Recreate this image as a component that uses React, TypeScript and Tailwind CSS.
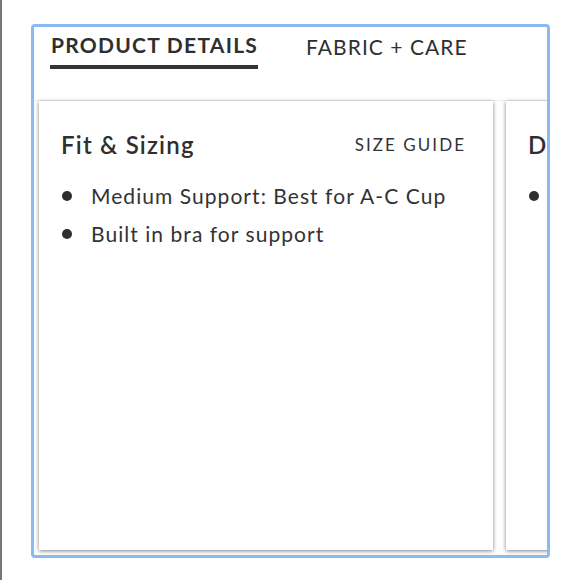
import React from 'react';

const Card: React.FC<{ title: string; action?: string; items: string[] }> = ({ title, action, items }) => {
  return (
    <div className="shrink-0 w-[454px] h-[449px] bg-white shadow-[0_1px_4px_rgba(0,0,0,0.5)] pl-[22px] pr-[27px] pt-[27px]">
      <div className="flex items-center justify-between h-[34px]">
        <h3 className="text-[24px] font-semibold tracking-[0.05em] text-[#2f2f2f]">{title}</h3>
        {action && <span className="text-[17px] tracking-[0.12em] text-[#333]">{action}</span>}
      </div>
      <ul className="mt-[15px] flex flex-col">
        {items.map((item) => (
          <li key={item} className="flex items-center h-[38px] text-[21px] tracking-[0.05em] text-[#333] whitespace-nowrap">
            <span className="w-[10px] h-[10px] rounded-full bg-[#2f2f2f] ml-[1px] mr-[19px] shrink-0" />
            {item}
          </li>
        ))}
      </ul>
    </div>
  );
};

const App: React.FC = () => {
  return (
    <div className="w-[580px] h-[580px] bg-white border-l-2 border-[#777] pt-[24px] pl-[29px]" style={{ fontFamily: 'Lato, "Noto Sans", sans-serif' }}>
      <div className="w-[519px] h-[534px] border-[3px] border-[#8bbaf0] rounded-[4px] overflow-hidden flex flex-col">
        <div className="flex items-start gap-[48px] pl-[17px] pt-[3px] h-[73px] text-[21px] text-[#2f2f2f]">
          <div className="flex flex-col">
            <span className="font-bold tracking-[0.06em] leading-[30px]">PRODUCT DETAILS</span>
            <span className="mt-[5px] h-[4px] bg-[#333] -ml-[1px]" />
          </div>
          <span className="leading-[30px] tracking-[0.05em] mt-[2px]">FABRIC + CARE</span>
        </div>
        <div className="flex gap-[13px] pl-[5px] border-t border-[#eee]">
          <Card title="Fit & Sizing" action="SIZE GUIDE" items={['Medium Support: Best for A-C Cup', 'Built in bra for support']} />
          <Card title="Details" items={['Lightweight fabric']} />
        </div>
      </div>
    </div>
  );
};

export default App;
